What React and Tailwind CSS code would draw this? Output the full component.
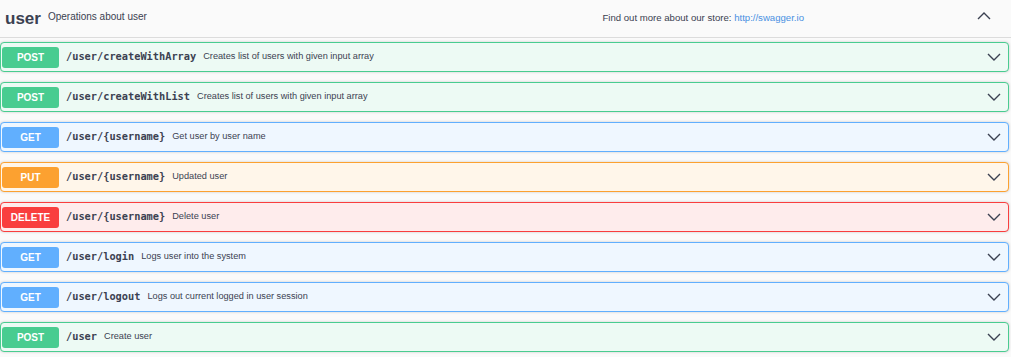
import React from "react";

const METHODS = {
  POST: { badge: "bg-[#49cc90]", box: "border-[#49cc90] bg-[#edfaf4]" },
  GET: { badge: "bg-[#61affe]", box: "border-[#61affe] bg-[#eff7ff]" },
  PUT: { badge: "bg-[#fca130]", box: "border-[#fca130] bg-[#fff6ea]" },
  DELETE: { badge: "bg-[#f93e3e]", box: "border-[#f93e3e] bg-[#feecec]" },
};

const OPS = [
  { method: "POST", path: "/user/createWithArray", summary: "Creates list of users with given input array" },
  { method: "POST", path: "/user/createWithList", summary: "Creates list of users with given input array" },
  { method: "GET", path: "/user/{username}", summary: "Get user by user name" },
  { method: "PUT", path: "/user/{username}", summary: "Updated user" },
  { method: "DELETE", path: "/user/{username}", summary: "Delete user" },
  { method: "GET", path: "/user/login", summary: "Logs user into the system" },
  { method: "GET", path: "/user/logout", summary: "Logs out current logged in user session" },
  { method: "POST", path: "/user", summary: "Create user" },
];

const Chevron = ({ up }) => (
  <svg width="14" height="9" viewBox="0 0 14 9" fill="none">
    <path
      d={up ? "M1 8 L7 2 L13 8" : "M1 1 L7 7 L13 1"}
      stroke="#3b4151"
      strokeWidth="1.4"
    />
  </svg>
);

const Operation = ({ method, path, summary }) => {
  const c = METHODS[method];
  return (
    <div
      className={`flex items-center h-[30px] border rounded-[4px] px-[1px] shadow-[0_0_3px_rgba(0,0,0,0.19)] ${c.box}`}
    >
      <span
        className={`w-[57px] h-[21px] rounded-[3px] flex items-center justify-center text-white font-bold text-[10px] ${c.badge}`}
      >
        {method}
      </span>
      <span className="ml-[7px] font-['DejaVu_Sans_Mono',monospace] font-bold text-[10.3px] text-[#3b4151]">
        {path}
      </span>
      <span className="ml-[7px] text-[9.2px] text-[#3b4151]">{summary}</span>
      <span className="ml-auto mr-[6px] flex items-center">
        <Chevron />
      </span>
    </div>
  );
};

const App = () => {
  return (
    <div className="w-[1011px] h-[357px] bg-[#fafafa] font-['Liberation_Sans',Arial,sans-serif] overflow-hidden">
      {/* Cabeçalho da tag */}
      <div className="flex items-center h-[38px] border-b border-[#dcdcdc] pl-[5px] pr-[20px] text-[#3b4151]">
        <span className="text-[17px] font-bold">user</span>
        <span className="ml-[7px] text-[10px] -mt-[4px]">Operations about user</span>
        <span className="ml-auto mr-[173px] text-[9.6px]">
          Find out more about our store:{" "}
          <span className="text-[#4990e2]">http://swagger.io</span>
        </span>
        <span className="flex items-center -mt-[6px]">
          <Chevron up />
        </span>
      </div>

      {/* Operações */}
      <div className="flex flex-col gap-[10px] pt-[4px] pr-[2px]">
        {OPS.map((op, i) => (
          <Operation key={i} {...op} />
        ))}
      </div>
    </div>
  );
};

export default App;
